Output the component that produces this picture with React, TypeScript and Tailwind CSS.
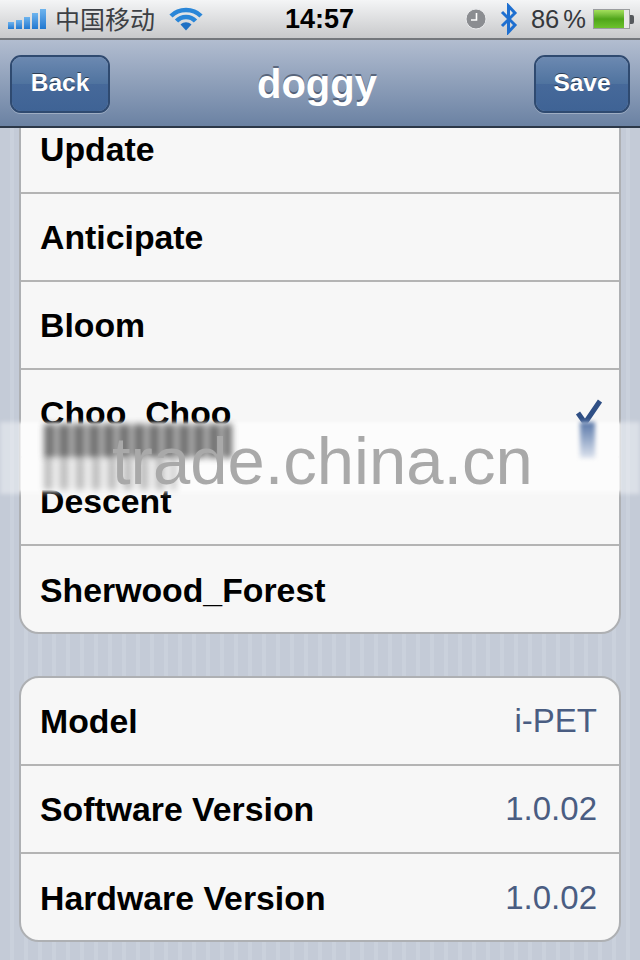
import React from 'react';

const font = 'font-["Liberation_Sans",Arial,sans-serif]';

const Signal = () => (
  <div className="flex items-end gap-[2px] h-[20px]">
    {[7, 9, 12, 16, 20].map((h, i) => (
      <div key={i} className="w-[6px] bg-gradient-to-b from-[#6db4ee] to-[#1f78d0]" style={{ height: h }} />
    ))}
  </div>
);

const Wifi = () => (
  <svg width="34" height="24" viewBox="0 0 34 24" fill="none">
    <path d="M2 9 C 10 1, 24 1, 32 9" stroke="#2a86d8" strokeWidth="4.5" />
    <path d="M7.5 14 C 12.5 8.5, 21.5 8.5, 26.5 14" stroke="#2a86d8" strokeWidth="4.5" />
    <path d="M11.5 17.5 L17 23.5 L22.5 17.5 C 19 14.5, 15 14.5, 11.5 17.5 Z" fill="#1f70c4" />
  </svg>
);

const Clock = () => (
  <svg width="22" height="22" viewBox="0 0 22 22">
    <circle cx="11" cy="11" r="10" fill="#8b8d91" stroke="#e9eaec" strokeWidth="1" />
    <path d="M11.5 5 V12 H6" stroke="#fff" strokeWidth="1.6" fill="none" />
  </svg>
);

const Bluetooth = () => (
  <svg width="20" height="32" viewBox="0 0 20 32" fill="none">
    <path d="M3 9 L16 22 L9.5 29 V3 L16 10 L3 23" stroke="#1e6fd0" strokeWidth="3" />
  </svg>
);

const Battery = () => (
  <div className="flex items-center">
    <div className="w-[37px] h-[20px] border border-[#9a9c9f] bg-[#e8e8e8] flex">
      <div className="w-[30px] bg-gradient-to-b from-[#a4e05c] via-[#4fa518] to-[#6cc22c]" />
    </div>
    <div className="w-[4px] h-[9px] bg-[#55585c] rounded-r-[2px]" />
  </div>
);

const NavButton = ({ label, width }: { label: string; width: string }) => (
  <button className={`${width} h-[58px] rounded-[11px] border-2 border-[#2f4a70] flex flex-col overflow-hidden relative shadow-[0_1px_0_rgba(255,255,255,0.3)]`}>
    <div className="flex-1 w-full bg-gradient-to-b from-[#6c89b1] to-[#4f739f]" />
    <div className="flex-1 w-full bg-gradient-to-b from-[#46699a] to-[#3f6395]" />
    <span className="absolute inset-0 flex items-center justify-center text-white text-[24.5px] font-bold [text-shadow:0_-1px_0_rgba(0,0,0,0.5)]">
      {label}
    </span>
  </button>
);

const Row = ({ label, value, check, last }: { label: string; value?: string; check?: boolean; last?: boolean }) => (
  <div className={`flex items-center justify-between pl-[19px] pr-[22px] ${last ? 'h-[86px] pt-[2px]' : 'h-[88px] border-b-2 border-[#b4b4b4]'}`}>
    <span className="text-[33.8px] font-bold text-black">{label}</span>
    {value && <span className="text-[33px] text-[#4a5d82]">{value}</span>}
    {check && (
      <svg width="30" height="30" viewBox="0 0 30 30" fill="none" className="-mr-[7px]">
        <path d="M4 15 L11 25 L26 3" stroke="#2f4f85" strokeWidth="5" />
      </svg>
    )}
  </div>
);

const App: React.FC = () => {
  return (
    <div className={`relative w-[640px] h-[960px] overflow-hidden flex flex-col ${font}`}>
      {/* Status bar */}
      <div className="h-[40px] shrink-0 flex items-center justify-between pl-[8px] pr-[6px] bg-gradient-to-b from-[#f4f5f6] to-[#c8c9cb] border-b-2 border-[#74777c] relative">
        <div className="flex items-center">
          <Signal />
          <span className='ml-[9px] text-[25px] text-[#3c3f44] font-["Noto_Sans_CJK_SC",sans-serif]'>中国移动</span>
          <div className="ml-[14px]"><Wifi /></div>
        </div>
        <span className="absolute left-[285px] text-[27px] font-bold text-black">14:57</span>
        <div className="flex items-center">
          <Clock />
          <div className="ml-[12px]"><Bluetooth /></div>
          <span className="ml-[12px] mr-[7px] text-[25.5px] text-[#35383c] [word-spacing:-3px]">86 %</span>
          <Battery />
        </div>
      </div>

      {/* Nav bar */}
      <div className="h-[88px] shrink-0 flex items-center justify-between pl-[10px] pr-[10px] pt-[1px] bg-gradient-to-b from-[#b2bdd0] to-[#6b82a3] border-b-2 border-[#2c3848] relative">
        <NavButton label="Back" width="w-[100px]" />
        <span className="mr-[10px] text-white text-[40px] font-bold [text-shadow:0_-2px_0_rgba(50,60,80,0.6)]">doggy</span>
        <NavButton label="Save" width="w-[96px]" />
      </div>

      {/* Content */}
      <div className="flex-1 overflow-hidden px-[19px] bg-[repeating-linear-gradient(90deg,#c4cbd7_0px,#c4cbd7_10px,#cad1dc_10px,#cad1dc_14px)]">
        <div className="-mt-[24px] bg-[#f7f7f7] rounded-[20px] border-2 border-[#aeb0b3]">
          <Row label="Update" />
          <Row label="Anticipate" />
          <Row label="Bloom" />
          <Row label="Choo_Choo" check />
          <Row label="Descent" />
          <Row label="Sherwood_Forest" last />
        </div>
        <div className="mt-[42px] bg-[#f7f7f7] rounded-[20px] border-2 border-[#aeb0b3]">
          <Row label="Model" value="i-PET" />
          <Row label="Software Version" value="1.0.02" />
          <Row label="Hardware Version" value="1.0.02" last />
        </div>
      </div>

      {/* Watermark */}
      <div className="absolute left-0 right-0 top-[422px] h-[72px] bg-white/40 blur-[2px]" />
      <div className="absolute left-[20px] w-[600px] top-[423px] h-[68px] bg-[#fcfcfc] blur-[1px]" />
      <div className="absolute left-[44px] w-[188px] top-[424px] h-[34px] blur-[3px] opacity-75 bg-[repeating-linear-gradient(90deg,#444_0px,#444_9px,#aaa_12px,#aaa_15px)]" />
      <div className="absolute left-[44px] w-[132px] top-[458px] h-[32px] blur-[3px] opacity-35 bg-[repeating-linear-gradient(90deg,#444_0px,#444_6px,#ddd_10px,#ddd_16px)]" />
      <div className="absolute left-[580px] w-[15px] top-[422px] h-[36px] blur-[2px] bg-gradient-to-b from-[#5a78a8] to-[#dde3ee]" />
      <span className="absolute left-[112px] top-[425px] text-[67px] leading-[72px] text-[#a9a9a9]">trade.china.cn</span>
    </div>
  );
};

export default App;
